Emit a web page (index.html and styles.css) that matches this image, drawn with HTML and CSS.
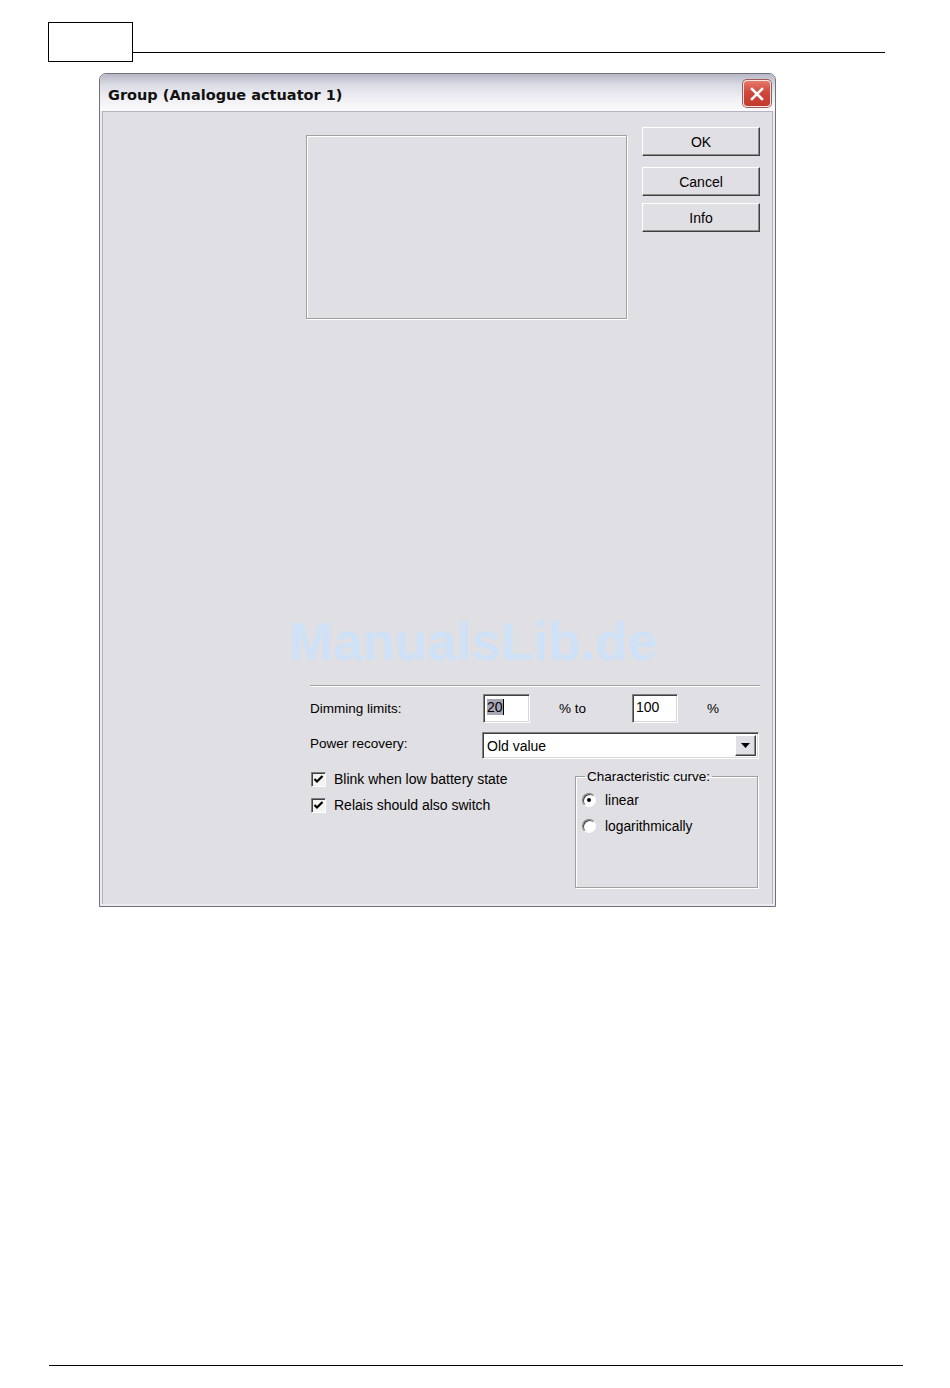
FILE: index.html
```html
<!DOCTYPE html>
<html lang="en">
<head>
    <meta charset="UTF-8">
    <meta name="viewport" content="width=device-width, initial-scale=1.0">
    <title>Group (Analogue actuator 1)</title>
    <link rel="stylesheet" href="styles.css">
</head>
<body>
    <!-- Page header: page-number box and rule -->
    <div class="page-header">
        <div class="page-box"></div>
        <div class="page-rule"></div>
    </div>

    <!-- Dialog window -->
    <div class="dialog">
        <div class="titlebar">
            <span class="title">Group (Analogue actuator 1)</span>
            <span class="close-btn">
                <svg width="16" height="16" viewBox="0 0 16 16">
                    <path d="M3 3 L13 13 M13 3 L3 13" stroke="#fff" stroke-width="2.6" stroke-linecap="square"/>
                </svg>
            </span>
        </div>

        <div class="client">
            <div class="top-row">
                <div class="preview"></div>
                <div class="buttons">
                    <button type="button" class="btn btn-ok">OK</button>
                    <button type="button" class="btn btn-cancel">Cancel</button>
                    <button type="button" class="btn btn-info">Info</button>
                </div>
            </div>

            <div class="settings">
                <div class="separator"></div>

                <div class="row row-dimming">
                    <span class="label">Dimming limits:</span>
                    <div class="field field-small"><span class="selected">20</span><span class="caret"></span></div>
                    <span class="unit unit-to">% to</span>
                    <div class="field field-small">100</div>
                    <span class="unit">%</span>
                </div>

                <div class="row row-power">
                    <span class="label">Power recovery:</span>
                    <div class="field combo">
                        <span class="combo-text">Old value</span>
                        <span class="combo-btn">
                            <svg width="9" height="5" viewBox="0 0 9 5"><path d="M0 0 H9 L4.5 5 Z" fill="#000"/></svg>
                        </span>
                    </div>
                </div>

                <div class="row row-options">
                    <div class="checks">
                        <label class="check">
                            <span class="check-box">
                                <svg width="11" height="11" viewBox="0 0 11 11"><path d="M1.5 5 L4 7.5 L9.5 2" fill="none" stroke="#000" stroke-width="2.2"/></svg>
                            </span>
                            Blink when low battery state
                        </label>
                        <label class="check">
                            <span class="check-box">
                                <svg width="11" height="11" viewBox="0 0 11 11"><path d="M1.5 5 L4 7.5 L9.5 2" fill="none" stroke="#000" stroke-width="2.2"/></svg>
                            </span>
                            Relais should also switch
                        </label>
                    </div>

                    <fieldset class="group">
                        <legend>Characteristic curve:</legend>
                        <label class="radio"><span class="radio-dot checked"></span>linear</label>
                        <label class="radio"><span class="radio-dot"></span>logarithmically</label>
                    </fieldset>
                </div>
            </div>

            <div class="watermark">ManualsLib.de</div>
        </div>
    </div>

    <!-- Page footer rule -->
    <div class="page-footer"></div>
</body>
</html>
```

FILE: styles.css
```css
body {
    margin: 0;
    padding: 0;
    background: #fff;
    font-family: "Liberation Sans", Arial, sans-serif;
    color: #000;
}

/* Page header */
.page-header {
    display: flex;
    align-items: flex-start;
    margin-top: 22px;
    padding-left: 48px;
}

.page-box {
    width: 85px;
    height: 40px;
    box-sizing: border-box;
    border: 1px solid #000;
}

.page-rule {
    width: 752px;
    height: 30px;
    border-bottom: 1px solid #000;
}

.page-footer {
    width: 854px;
    margin: 458px 0 0 49px;
    border-top: 1px solid #000;
}

/* Dialog */
.dialog {
    width: 677px;
    height: 834px;
    box-sizing: border-box;
    margin: 11px 0 0 99px;
    border: 1px solid #70707e;
    border-radius: 7px 7px 0 0;
    background: #ecebf0;
    padding: 0 2px 2px 2px;
    display: flex;
    flex-direction: column;
}

.titlebar {
    height: 37px;
    margin: 0 -2px;
    display: flex;
    align-items: center;
    justify-content: space-between;
    padding: 0 4px 0 8px;
    border-radius: 6px 6px 0 0;
    background: linear-gradient(to bottom, #b7b7c6 0%, #dcdce6 30%, #f1f1f5 70%, #fafafc 100%);
}

.title {
    font-family: "DejaVu Sans", Tahoma, sans-serif;
    font-weight: bold;
    font-size: 14.5px;
    padding-top: 4px;
    color: #111;
}

.close-btn {
    width: 26px;
    height: 25px;
    display: flex;
    align-items: center;
    justify-content: center;
    border: 1px solid #f4e6e4;
    border-radius: 4px;
    background: linear-gradient(to bottom, #e57a6a 0%, #d1463a 45%, #c23a2e 100%);
    box-shadow: 0 0 0 1px #a05a5a;
    margin-top: 2px;
}

.client {
    position: relative;
    flex: 1;
    background: #e0dfe3;
    border-top: 1px solid #b4b4c0;
    border-left: 1px solid #b4b4c0;
    border-right: 1px solid #b4b4c0;
    font-size: 13.5px;
}

.top-row {
    display: flex;
    align-items: flex-start;
    padding: 15px 0 0 203px;
}

.preview {
    width: 321px;
    height: 184px;
    box-sizing: border-box;
    margin-top: 8px;
    border: 1px solid #a0a0a0;
    box-shadow: inset 1px 1px #fff, 1px 1px #fff;
}

.buttons {
    display: flex;
    flex-direction: column;
    margin-left: 15px;
    width: 118px;
}

.btn {
    height: 29px;
    padding: 0;
    font-family: "Liberation Sans", Arial, sans-serif;
    font-size: 14px;
    color: #000;
    background: #e0dfe3;
    border: 1px solid;
    border-color: #fff #404040 #404040 #fff;
    box-shadow: inset -1px -1px #8c8c8c;
}

.btn-cancel {
    margin-top: 11px;
}

.btn-info {
    margin-top: 7px;
}

/* Settings area */
.settings {
    margin: 366px 0 0 207px;
    width: 450px;
}

.separator {
    height: 1px;
    background: #a0a0a0;
    border-bottom: 1px solid #fff;
}

.row {
    display: flex;
    align-items: center;
}

.row-dimming {
    margin-top: 7px;
    height: 29px;
}

.row-power {
    margin-top: 9px;
    height: 27px;
}

.label {
    width: 173px;
}

.row-power .label {
    width: 172px;
    margin-top: -5px;
}

.field {
    box-sizing: border-box;
    background: #fff;
    border: 1px solid;
    border-color: #808080 #fff #fff #808080;
    box-shadow: inset 1px 1px #404040, inset -1px -1px #d8d7dc;
}

.field-small {
    width: 47px;
    height: 29px;
    padding: 3px 0 0 3px;
    font-size: 14px;
    line-height: 18px;
}

.selected {
    background: #a7a6b4;
}

.caret {
    display: inline-block;
    width: 1px;
    height: 16px;
    background: #000;
    vertical-align: -3px;
}

.unit-to {
    width: 102px;
    padding-left: 28px;
    box-sizing: border-box;
}

.unit {
    padding-left: 29px;
}

.row-dimming .field-small + .unit-to + .field-small {
    width: 46px;
}

.combo {
    width: 277px;
    height: 27px;
    display: flex;
    align-items: center;
    justify-content: space-between;
    padding: 2px 2px 2px 4px;
    font-size: 14px;
}

.combo-btn {
    width: 21px;
    height: 21px;
    display: flex;
    align-items: center;
    justify-content: center;
    box-sizing: border-box;
    background: #e0dfe3;
    border: 1px solid;
    border-color: #fff #404040 #404040 #fff;
    box-shadow: inset -1px -1px #8c8c8c;
}

.row-options {
    margin-top: 10px;
    align-items: flex-start;
}

.checks {
    width: 265px;
    padding-top: 2px;
    display: flex;
    flex-direction: column;
    gap: 10px;
    font-size: 14px;
}

.check {
    display: flex;
    align-items: center;
    height: 16px;
    padding-left: 1px;
}

.check-box {
    width: 15px;
    height: 15px;
    box-sizing: border-box;
    margin-right: 8px;
    display: flex;
    align-items: center;
    justify-content: center;
    background: #f3f3f1;
    border: 1px solid;
    border-color: #808080 #fff #fff #808080;
    box-shadow: inset 1px 1px #404040;
}

.group {
    width: 183px;
    height: 119px;
    box-sizing: border-box;
    margin: 0;
    padding: 8px 6px 0 6px;
    border: 1px solid #a0a0a0;
    box-shadow: inset 1px 1px #fff, 1px 1px #fff;
}

.group legend {
    margin-left: 3px;
    padding: 0 2px;
    line-height: 15px;
}

.radio {
    display: flex;
    align-items: center;
    height: 16px;
    margin-bottom: 10px;
    font-size: 13.8px;
}

.radio-dot {
    width: 14px;
    height: 14px;
    box-sizing: border-box;
    margin-right: 9px;
    border-radius: 50%;
    background: #fff;
    border: 1px solid;
    border-color: #808080 #fff #fff #808080;
    box-shadow: inset 1px 1px #404040, 0 0 0 0.5px #d8d7dc;
    position: relative;
}

.radio-dot.checked::after {
    content: "";
    position: absolute;
    left: 4px;
    top: 4px;
    width: 4px;
    height: 4px;
    border-radius: 50%;
    background: #000;
}

.watermark {
    position: absolute;
    left: 186px;
    top: 503px;
    font-family: "Liberation Sans", Arial, sans-serif;
    font-weight: bold;
    font-size: 53px;
    line-height: 1;
    color: #cfe1f7;
    pointer-events: none;
}
```
